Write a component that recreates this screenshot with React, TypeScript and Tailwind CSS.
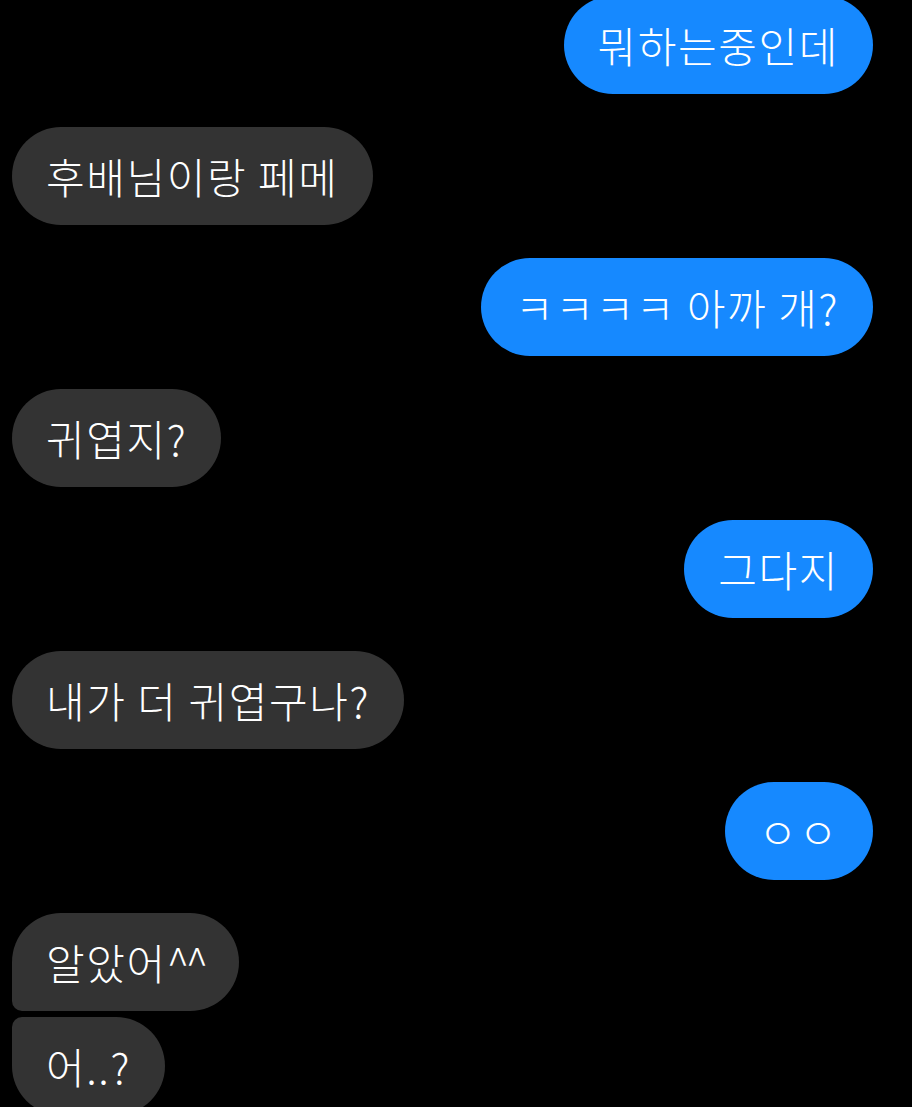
import React from "react";

type Msg = {
  text: React.ReactNode;
  mine: boolean;
  shape?: string;
  gap?: string;
};

const messages: Msg[] = [
  { text: "뭐하는중인데", mine: true },
  { text: "후배님이랑 페메", mine: false },
  { text: "ㅋㅋㅋㅋ 아까 개?", mine: true },
  { text: "귀엽지?", mine: false },
  { text: "그다지", mine: true },
  { text: "내가 더 귀엽구나?", mine: false },
  { text: "ㅇㅇ", mine: true },
  {
    text: (
      <>
        알았어<span className="tracking-[-3.5px]">^^</span>
      </>
    ),
    mine: false,
    shape: "rounded-[49px] rounded-bl-[10px]",
  },
  { text: "어..?", mine: false, shape: "rounded-[49px] rounded-tl-[10px]", gap: "mt-[6px]" },
];

function Bubble({ msg }: { msg: Msg }) {
  const color = msg.mine ? "bg-[#1689ff]" : "bg-[#333333]";
  const shape = msg.shape ?? "rounded-[49px]";
  return (
    <div className={`flex ${msg.mine ? "justify-end" : "justify-start"} ${msg.gap ?? "mt-[33px] first:mt-0"}`}>
      <div
        className={`${color} ${shape} h-[98px] pl-[34px] pr-[34px] flex items-center text-[42px] font-light tracking-[1.6px] leading-none text-white whitespace-nowrap`}
      >
        {msg.text}
      </div>
    </div>
  );
}

export default function App() {
  return (
    <main
      className="h-[1107px] w-full overflow-hidden bg-black"
      style={{ fontFamily: '"Noto Sans CJK KR", "Noto Sans", sans-serif' }}
    >
      <div className="-mt-[4px] flex flex-col pl-[12px] pr-[39px]">
        {messages.map((m, i) => (
          <Bubble key={i} msg={m} />
        ))}
      </div>
    </main>
  );
}
